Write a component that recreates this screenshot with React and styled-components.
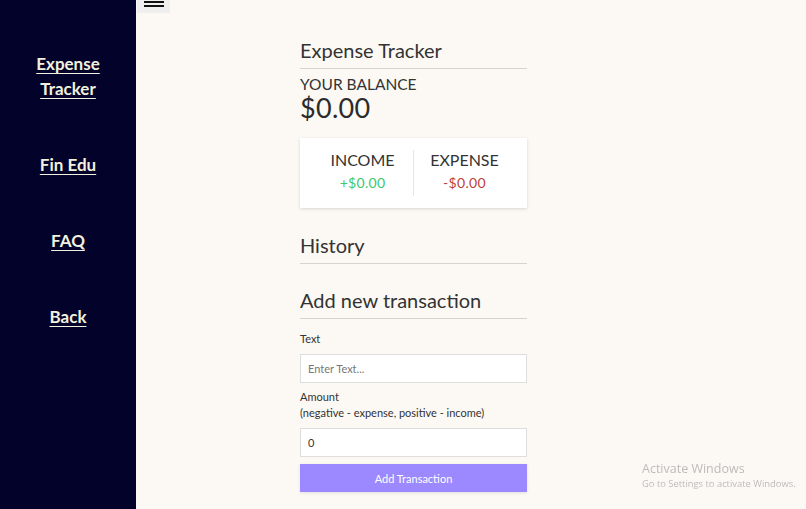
import React from "react";
import styled, { createGlobalStyle } from "styled-components";

const Global = createGlobalStyle`
  * { box-sizing: border-box; }
  html, body { margin: 0; padding: 0; height: 100%; }
  body { font-family: Lato, "Noto Sans", sans-serif; background: #fcf9f5; color: #333; }
  #root { height: 100%; }
`;

const Page = styled.div`
  display: flex;
  width: 806px;
  height: 509px;
  overflow: hidden;
`;

const Sidebar = styled.nav`
  width: 136px;
  flex-shrink: 0;
  background: #03022b;
  display: flex;
  flex-direction: column;
  align-items: center;
  padding-top: 51px;
  gap: 51px;
`;

const NavLink = styled.a`
  font-family: Lato, "Open Sans", sans-serif;
  font-weight: 700;
  font-size: 17px;
  line-height: 25px;
  color: #f2f1df;
  text-decoration: underline;
  text-underline-offset: 3px;
  text-decoration-thickness: 1px;
  text-align: center;
  width: 70px;
  cursor: pointer;
`;

const Main = styled.main`
  flex: 1;
  position: relative;
  padding-left: 164px;
`;

const Burger = styled.button`
  position: absolute;
  left: 1px;
  top: 0;
  width: 33px;
  height: 13px;
  border: none;
  background: #efefef;
  padding: 0;
  display: flex;
  flex-direction: column;
  align-items: center;
  gap: 2px;
  padding-top: 1px;
  span {
    display: block;
    width: 20px;
    height: 2px;
    background: #111;
  }
`;

const Container = styled.div`
  width: 227px;
  padding-top: 38px;
`;

const Heading = styled.h2`
  margin: ${(p) => p.$mt || 0}px 0 0;
  font-size: 20px;
  line-height: 24px;
  font-weight: 400;
  color: #333;
  padding-bottom: 6px;
  border-bottom: 1px solid #d6d3d0;
`;

const BalanceLabel = styled.h4`
  margin: 6px 0 0;
  font-size: 15.5px;
  line-height: 19px;
  font-weight: 400;
  text-transform: uppercase;
  color: #333;
`;

const Balance = styled.h1`
  margin: 0;
  font-size: 27px;
  line-height: 28px;
  font-weight: 400;
  color: #2b2b2b;
  letter-spacing: 0.3px;
`;

const Card = styled.div`
  margin-top: 16px;
  background: #fff;
  box-shadow: 0 1px 3px rgba(0, 0, 0, 0.15);
  height: 70px;
  display: flex;
  padding: 12px 12px;
`;

const Col = styled.div`
  flex: 1;
  text-align: center;
  display: flex;
  flex-direction: column;
  align-items: center;
  & + & {
    border-left: 1px solid #e6e6e6;
  }
`;

const ColTitle = styled.div`
  font-size: 16px;
  line-height: 20px;
  text-transform: uppercase;
  color: #333;
`;

const Money = styled.div`
  margin-top: 4px;
  font-size: 14px;
  line-height: 18px;
  letter-spacing: 0.3px;
  color: ${(p) => (p.$plus ? "#3cc86f" : "#c0413b")};
`;

const Label = styled.label`
  display: block;
  margin-top: ${(p) => p.$mt || 0}px;
  font-size: 11px;
  line-height: 16px;
  color: #333;
`;

const Input = styled.input`
  display: block;
  width: 100%;
  height: 29px;
  margin-top: ${(p) => p.$mt || 0}px;
  border: 1px solid #dedede;
  background: #fff;
  font-family: Lato, sans-serif;
  font-size: 11px;
  padding: 0 7px;
  color: #333;
  outline: none;
  &::placeholder { color: #777; }
`;

const Button = styled.button`
  display: block;
  width: 100%;
  height: 28px;
  margin-top: 7px;
  border: none;
  background: #9c88ff;
  color: #fff;
  font-family: Lato, sans-serif;
  font-size: 11px;
  box-shadow: 0 1px 3px rgba(0, 0, 0, 0.1);
  cursor: pointer;
`;

const Watermark = styled.div`
  position: fixed;
  left: 642px;
  top: 461px;
  font-family: "Open Sans", "Noto Sans", sans-serif;
  color: #bdbcbb;
  pointer-events: none;
  div:first-child { font-size: 12.5px; line-height: 16px; }
  div:last-child { font-size: 9.4px; line-height: 14px; }
`;

export default function App() {
  return (
    <>
      <Global />
      <Page>
        <Sidebar>
          <NavLink>Expense Tracker</NavLink>
          <NavLink>Fin Edu</NavLink>
          <NavLink>FAQ</NavLink>
          <NavLink>Back</NavLink>
        </Sidebar>
        <Main>
          <Burger aria-label="menu">
            <span />
            <span />
          </Burger>
          <Container>
            <Heading>Expense Tracker</Heading>
            <BalanceLabel>Your Balance</BalanceLabel>
            <Balance>$0.00</Balance>
            <Card>
              <Col>
                <ColTitle>Income</ColTitle>
                <Money $plus>+$0.00</Money>
              </Col>
              <Col>
                <ColTitle>Expense</ColTitle>
                <Money>-$0.00</Money>
              </Col>
            </Card>
            <Heading $mt={25}>History</Heading>
            <Heading $mt={24}>Add new transaction</Heading>
            <Label $mt={12}>Text</Label>
            <Input $mt={7} placeholder="Enter Text..." />
            <Label $mt={6}>
              Amount
              <br />
              (negative - expense, positive - income)
            </Label>
            <Input $mt={7} defaultValue="0" />
            <Button>Add Transaction</Button>
          </Container>
          <Watermark>
            <div>Activate Windows</div>
            <div>Go to Settings to activate Windows.</div>
          </Watermark>
        </Main>
      </Page>
    </>
  );
}
